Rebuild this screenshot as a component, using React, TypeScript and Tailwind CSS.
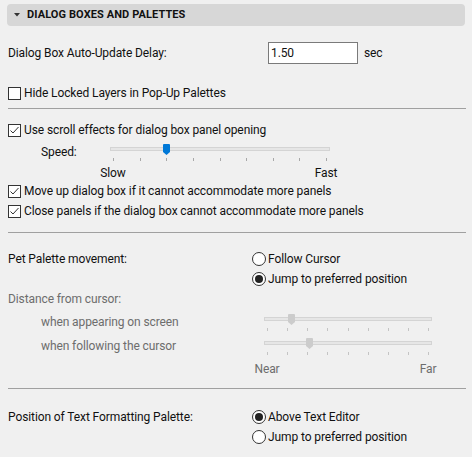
import React from "react";

function Check({ checked }: { checked?: boolean }) {
  return (
    <span className="w-[13px] h-[13px] border border-[#333333] bg-white flex items-center justify-center shrink-0">
      {checked && (
        <svg width="11" height="11" viewBox="0 0 11 11">
          <path d="M1.5 5.5 L4 8 L9.5 2" fill="none" stroke="#333333" strokeWidth="1" />
        </svg>
      )}
    </span>
  );
}

function Radio({ on }: { on?: boolean }) {
  return (
    <span className="w-[14px] h-[14px] rounded-full border border-[#333333] bg-white flex items-center justify-center shrink-0">
      {on && <span className="w-[8px] h-[8px] rounded-full bg-[#222222]" />}
    </span>
  );
}

function Thumb({ color }: { color: string }) {
  return (
    <svg width="7" height="11" viewBox="0 0 7 11">
      <path d="M0 1 Q0 0 1 0 H6 Q7 0 7 1 V8 L3.5 11 L0 8 Z" fill={color} />
    </svg>
  );
}

function Slider({
  width,
  firstTick,
  lastTick,
  thumbX,
  thumbColor,
  tickColor,
}: {
  width: number;
  firstTick: number;
  lastTick: number;
  thumbX: number;
  thumbColor: string;
  tickColor: string;
}) {
  const ticks = Array.from({ length: 9 }, (_, i) => firstTick + ((lastTick - firstTick) * i) / 8);
  return (
    <div className="flex flex-col" style={{ width }}>
      <div className="relative h-[11px]">
        <div className="absolute left-0 right-0 top-[3px] h-[4px] bg-[#e6e6e6] border border-[#d4d4d4]" />
        <div className="absolute top-0" style={{ left: thumbX - 3.5 }}>
          <Thumb color={thumbColor} />
        </div>
      </div>
      <div className="relative h-[3px] mt-[3px]">
        {ticks.map((t, i) => (
          <div key={i} className="absolute top-0 w-[1px] h-[3px]" style={{ left: Math.round(t), background: tickColor }} />
        ))}
      </div>
    </div>
  );
}

function CheckRow({ checked, label, className }: { checked?: boolean; label: string; className?: string }) {
  return (
    <div className={"flex items-center h-[14px] pl-[8px] " + (className ?? "")}>
      <Check checked={checked} />
      <span className="ml-[3px] leading-[14px]">{label}</span>
    </div>
  );
}

function RadioRow({ on, label }: { on?: boolean; label: string }) {
  return (
    <div className="flex items-center h-[14px]">
      <Radio on={on} />
      <span className="ml-[2px] leading-[14px]">{label}</span>
    </div>
  );
}

export default function App() {
  return (
    <div className="w-[472px] h-[457px] bg-[#f0f0f0] text-[12px] tracking-[-0.1px] text-[#111111] overflow-hidden flex flex-col font-['Roboto',sans-serif]">
      {/* header */}
      <div className="mx-[7px] mt-[4px] h-[22px] rounded-[4px] bg-[#d7d7d7] flex items-center pl-[7px] shrink-0">
        <svg width="6" height="4" viewBox="0 0 6 4">
          <path d="M0 0 H6 L3 3.5 Z" fill="#333333" />
        </svg>
        <span className="ml-[7px] font-bold text-[11px] tracking-[0.1px] leading-[14px]">DIALOG BOXES AND PALETTES</span>
      </div>

      {/* delay */}
      <div className="mt-[16px] h-[22px] flex items-center pl-[8px] shrink-0">
        <span className="w-[260px] leading-[14px]">Dialog Box Auto-Update Delay:</span>
        <div className="w-[90px] h-[22px] border border-[#7a7a7a] bg-white flex items-center pl-[2px] leading-[14px]">1.50</div>
        <span className="ml-[6px] leading-[14px]">sec</span>
      </div>

      <CheckRow className="mt-[22px] shrink-0" label="Hide Locked Layers in Pop-Up Palettes" />

      <div className="mt-[8px] h-[1px] ml-[8px] mr-[6px] bg-[#a0a0a0] shrink-0" />

      <CheckRow className="mt-[14px] shrink-0" checked label="Use scroll effects for dialog box panel opening" />

      {/* speed */}
      <div className="mt-[7px] flex items-start shrink-0">
        <span className="pl-[41px] w-[110px] mt-[1px] leading-[14px]">Speed:</span>
        <Slider width={220} firstTick={3} lastTick={216} thumbX={56.5} thumbColor="#0078d7" tickColor="#a8a8a8" />
      </div>
      <div className="mt-[5px] h-[14px] relative shrink-0 leading-[14px]">
        <span className="absolute left-[113px] -translate-x-1/2">Slow</span>
        <span className="absolute left-[326px] -translate-x-1/2">Fast</span>
      </div>

      <CheckRow className="mt-[4px] shrink-0" checked label="Move up dialog box if it cannot accommodate more panels" />
      <CheckRow className="mt-[6px] shrink-0" checked label="Close panels if the dialog box cannot accommodate more panels" />

      <div className="mt-[14px] h-[1px] ml-[8px] mr-[6px] bg-[#a0a0a0] shrink-0" />

      {/* pet palette */}
      <div className="mt-[19px] flex items-start pl-[8px] shrink-0">
        <span className="w-[244px] leading-[14px]">Pet Palette movement:</span>
        <div className="flex flex-col gap-[6px]">
          <RadioRow label="Follow Cursor" />
          <RadioRow on label="Jump to preferred position" />
        </div>
      </div>

      <div className="mt-[6px] pl-[8px] h-[14px] leading-[14px] text-[#6d6d6d] shrink-0">Distance from cursor:</div>

      <div className="mt-[8px] flex items-start shrink-0 text-[#6d6d6d]">
        <span className="pl-[41px] w-[264px] mt-[1px] leading-[14px]">when appearing on screen</span>
        <Slider width={168} firstTick={3} lastTick={164} thumbX={27} thumbColor="#cccccc" tickColor="#c4c4c4" />
      </div>
      <div className="mt-[7px] flex items-start shrink-0 text-[#6d6d6d]">
        <span className="pl-[41px] w-[264px] mt-[1px] leading-[14px]">when following the cursor</span>
        <Slider width={168} firstTick={3} lastTick={164} thumbX={45.5} thumbColor="#cccccc" tickColor="#c4c4c4" />
      </div>
      <div className="mt-[7px] h-[14px] relative shrink-0 leading-[14px] text-[#6d6d6d]">
        <span className="absolute left-[267px] -translate-x-1/2">Near</span>
        <span className="absolute left-[428px] -translate-x-1/2">Far</span>
      </div>

      <div className="mt-[12px] h-[1px] ml-[8px] mr-[6px] bg-[#a0a0a0] shrink-0" />

      <div className="mt-[21px] flex items-start pl-[8px] shrink-0">
        <span className="w-[244px] leading-[14px]">Position of Text Formatting Palette:</span>
        <div className="flex flex-col gap-[6px]">
          <RadioRow on label="Above Text Editor" />
          <RadioRow label="Jump to preferred position" />
        </div>
      </div>
    </div>
  );
}
